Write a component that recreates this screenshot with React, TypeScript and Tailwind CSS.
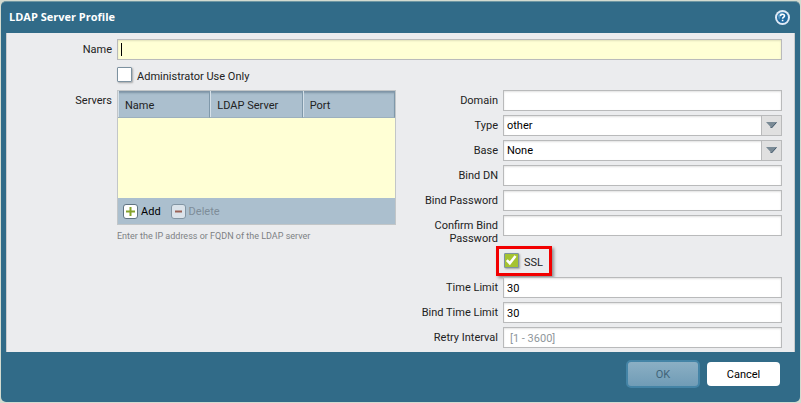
import React from 'react';
import clsx from 'clsx';

const INPUT = 'block h-[21px] w-full rounded-none border border-[#b9babb] px-[3px] pt-px text-[11px] leading-[18px] text-black shadow-[inset_0_1px_2px_rgba(0,0,0,0.12)] outline-none';

interface FieldProps {
  id: string;
  label: string;
  value?: string;
  placeholder?: string;
  type?: string;
}

const FieldLabel: React.FC<{ htmlFor: string; children: React.ReactNode }> = ({ htmlFor, children }) => (
  <label htmlFor={htmlFor} className="w-[107px] shrink-0 pt-[4px] pr-[5px] pl-3 text-right text-[11px] leading-[13px]">{children}</label>
);

const TextField: React.FC<FieldProps> = ({ id, label, value, placeholder, type = 'text' }) => (
  <div className="flex h-[21px]">
    <FieldLabel htmlFor={id}>{label}</FieldLabel>
    <div className="min-w-0 flex-1">
      <input id={id} type={type} defaultValue={value} placeholder={placeholder}
        className={clsx(INPUT, 'bg-white placeholder:pl-[3px] placeholder:text-[#8f979c]')} />
    </div>
  </div>
);

const SelectField: React.FC<{ id: string; label: string; options: string[] }> = ({ id, label, options }) => (
  <div className="flex h-[21px]">
    <FieldLabel htmlFor={id}>{label}</FieldLabel>
    <div className="relative min-w-0 flex-1">
      <select id={id} className={clsx(INPUT, 'appearance-none bg-white')}>
        {options.map(o => <option key={o}>{o}</option>)}
      </select>
      <span className="pointer-events-none absolute top-0 right-0 flex h-[21px] w-[21px] items-start justify-center border border-[#b9babb] bg-[#e0e0e0] pt-[6px]">
        <svg width="11" height="7" viewBox="0 0 11 7">
          <path d="M0 0H11L5.5 6Z" fill="#7a8a95" />
          <path d="M10.5 .5L5.5 6L4.5 5" fill="none" stroke="#40576a" strokeWidth="1" />
        </svg>
      </span>
    </div>
  </div>
);

const CheckBox: React.FC<{ id: string; label: string; checked?: boolean }> = ({ id, label, checked }) => (
  <span className="flex items-start">
    <span className="relative block h-[15px] w-[15px] shrink-0">
      <input id={id} type="checkbox" defaultChecked={checked}
        className="peer block h-[15px] w-[15px] appearance-none rounded-[1px] border border-[#7d92a0] bg-white shadow-[1px_1px_2px_rgba(0,0,0,0.3)] checked:bg-[#a5c331]" />
      <svg className="pointer-events-none absolute inset-0 hidden peer-checked:block" width="15" height="15" viewBox="0 0 15 15">
        <path d="M2.8 7.2L5.8 10.2L11.5 3" fill="none" stroke="#fff" strokeWidth="2.6" />
      </svg>
    </span>
    <label htmlFor={id} className="pt-[2px] pl-[5px] text-[11px] leading-[15px]">{label}</label>
  </span>
);

const AddIcon = () => (
  <svg width="15" height="15" viewBox="0 0 15 15">
    <rect x=".5" y=".5" width="14" height="14" rx="2.5" fill="#fff" stroke="#5f7382" />
    <path d="M7.5 3V12M3 7.5H12" stroke="#86a32b" strokeWidth="2" />
  </svg>
);

const DeleteIcon = () => (
  <svg width="15" height="15" viewBox="0 0 15 15">
    <rect x=".5" y=".5" width="14" height="14" rx="2.5" fill="#dbe3ea" stroke="#8295a3" />
    <path d="M4 7.5H11" stroke="#9a6257" strokeWidth="2" />
  </svg>
);

const HelpIcon = () => (
  <svg width="15" height="15" viewBox="0 0 15 15">
    <circle cx="7.5" cy="7.5" r="7.5" fill="#dfeaf6" />
    <circle cx="7.5" cy="7.5" r="5.5" fill="#226a9f" />
    <path d="M3 6A5 5 0 0 1 8 2.3L4 10Z" fill="#5c9cc6" />
    <path d="M5.5 6C5.5 3.7 9.5 3.7 9.5 6C9.5 7.2 7.6 7.2 7.6 8.8M7.6 9.8V11.2" fill="none" stroke="#fff" strokeWidth="1.6" />
  </svg>
);

const COLUMNS = ['Name', 'LDAP Server', 'Port'];

const ServerTable = () => (
  <div className="border border-[#c2c6c8]">
    <table className="w-full table-fixed border-separate border-spacing-0 text-[11px]">
      <thead>
        <tr className="bg-[#abbfce] shadow-[inset_0_2px_2px_rgba(70,95,115,0.45)]">
          {COLUMNS.map(c => (
            <th key={c} className="border-r border-b border-r-[#7f98aa] border-b-[#9cb0be] p-0 text-left font-normal">
              <span className="block h-[26px] border-l border-[#d5e0e8] pt-[7px] pl-[6px] leading-[16px]">{c}</span>
            </th>
          ))}
        </tr>
      </thead>
      <tbody>
        <tr><td colSpan={3} className="h-[80px] bg-[#ffffd5] p-0" /></tr>
      </tbody>
    </table>
    <div className="flex h-[26px] items-center gap-[10px] bg-[#abbfce] pl-[5px] text-[11px] leading-[16px]">
      <button type="button" className="flex items-center gap-[3px] text-black"><AddIcon /><span className="pt-[2px]">Add</span></button>
      <button type="button" disabled className="flex items-center gap-[3px] text-[#7e8d99]"><DeleteIcon /><span className="pt-[2px]">Delete</span></button>
    </div>
  </div>
);

const App: React.FC = () => (
  <div className="bg-[#d3dbd0] px-px pt-px pb-px font-['Roboto','Open_Sans',sans-serif] text-[#222]">
    <form className="rounded-[5px] border-t border-[#6f97a3] bg-[#316b88] px-[5px]" onSubmit={e => e.preventDefault()}>
      <header className="flex h-[31px] items-center justify-between pr-[5px] pl-[3px]">
        <h1 className="font-['Open_Sans','Noto_Sans',sans-serif] text-[11px] font-bold text-white">LDAP Server Profile</h1>
        <button type="button" aria-label="Help"><HelpIcon /></button>
      </header>

      <main className="border-x border-[#c9cbcc] bg-[#ebecee] pt-[6px] pr-[12px] pb-[4px]">
        <div className="flex">
          <label htmlFor="name" className="w-[110px] shrink-0 pt-[3px] pr-[5px] text-right text-[11px] leading-[16px]">Name</label>
          <div className="relative min-w-0 flex-1">
            <input id="name" type="text" autoFocus className={clsx(INPUT, 'bg-[#ffffd5] caret-transparent')} />
            <span className="pointer-events-none absolute top-[4px] left-[4px] h-[13px] w-px bg-black" />
          </div>
        </div>
        <div className="flex pt-[7px] pb-[6px] pl-[110px]">
          <CheckBox id="admin-only" label="Administrator Use Only" />
        </div>

        <div className="grid grid-cols-[110px_1fr_107px_1fr]">
          <div className="pt-[3px] pr-[5px] text-right text-[11px] leading-[16px]">Servers</div>
          <div>
            <ServerTable />
            <p className="pt-[4px] text-[9px] leading-[14px] text-[#7d8184]">Enter the IP address or FQDN of the LDAP server</p>
          </div>
          <div className="col-span-2 flex flex-col gap-[4px]">
            <TextField id="domain" label="Domain" />
            <SelectField id="type" label="Type" options={['other', 'active-directory', 'e-directory', 'sun']} />
            <SelectField id="base" label="Base" options={['None']} />
            <TextField id="bind-dn" label="Bind DN" />
            <TextField id="bind-password" label="Bind Password" type="password" />
            <TextField id="confirm-password" label="Confirm Bind Password" type="password" />
            <div className="mt-[6px] mb-[-3px] ml-[100px] h-[30px] w-[56px] border-3 border-[#f20000] pt-[4px] pl-[5px] shadow-[2px_2px_3px_rgba(0,0,0,0.4)]">
              <CheckBox id="ssl" label="SSL" checked />
            </div>
            <TextField id="time-limit" label="Time Limit" value="30" />
            <TextField id="bind-time-limit" label="Bind Time Limit" value="30" />
            <TextField id="retry-interval" label="Retry Interval" placeholder="[1 - 3600]" />
          </div>
        </div>
      </main>

      <footer className="flex h-[50px] items-start justify-end gap-[7px] pt-[8px] pr-[15px]">
        <button type="submit" disabled className="h-[28px] w-[74px] rounded-[5px] border-2 border-[#4484a6] bg-linear-to-b from-[#8bafc4] to-[#709cb6] pt-[2px] text-[11px] text-[#41647a]">OK</button>
        <button type="button" className="mt-[2px] h-[24px] w-[73px] rounded-[4px] bg-white pt-[2px] text-[11px] text-black">Cancel</button>
      </footer>
    </form>
  </div>
);

export default App;
